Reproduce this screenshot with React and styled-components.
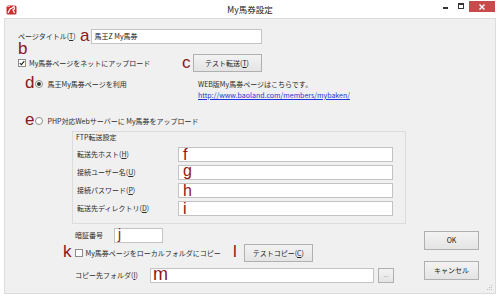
import React from "react";
import styled, { createGlobalStyle } from "styled-components";

const Global = createGlobalStyle`
  html, body { margin: 0; padding: 0; background: #ffffff; }
  body { font-family: "Noto Sans CJK JP", "Noto Sans", sans-serif; }
`;

const Window = styled.div`
  width: 500px;
  height: 298px;
  box-sizing: border-box;
  padding: 0 4px 4px 4px;
  background: #ffffff;
  display: flex;
  flex-direction: column;
  font-family: "Noto Sans CJK JP", "Noto Sans", sans-serif;
  font-size: 7px;
  color: #2a2a2a;
`;

const TitleBar = styled.div`
  height: 18px;
  flex: none;
  display: grid;
  grid-template-columns: 1fr auto 1fr;
  align-items: start;
`;

const AppIcon = styled.svg`
  margin: 5px 0 0 2px;
  width: 11px;
  height: 10px;
`;

const Title = styled.div`
  font-size: 8.5px;
  line-height: 18px;
  color: #222;
`;

const Controls = styled.div`
  justify-self: end;
  display: flex;
  align-items: flex-start;
  margin-right: 1px;
`;

const MinBtn = styled.div`
  width: 5px;
  height: 1.5px;
  background: #333;
  margin: 7px 10px 0 0;
`;

const MaxBtn = styled.div`
  width: 4px;
  height: 3px;
  border: 1px solid #333;
  border-top-width: 2px;
  margin: 3px 5px 0 0;
`;

const CloseBtn = styled.div`
  width: 26px;
  height: 11px;
  margin-top: 1px;
  background: #c94a4a;
  display: flex;
  align-items: center;
  justify-content: center;
`;

const Content = styled.div`
  flex: 1;
  position: relative;
  box-sizing: border-box;
  border: 1px solid #dcdcdc;
  background: #f0f0f0;
  display: grid;
  grid-template-columns: 1fr 55px;
  padding: 10px 16px 10px 13px;
`;

const Main = styled.div`
  display: flex;
  flex-direction: column;
`;

const Side = styled.div`
  display: flex;
  flex-direction: column;
  justify-content: flex-end;
  gap: 11px;
  padding-bottom: 3px;
`;

const Row = styled.div`
  display: flex;
  align-items: ${(p) => p.$align || "center"};
  height: ${(p) => p.$h}px;
  margin-top: ${(p) => p.$mt || 0}px;
  margin-left: ${(p) => p.$ml || 0}px;
`;

const TopRow = styled.div`
  display: flex;
  align-items: flex-start;
  margin-top: ${(p) => p.$mt || 0}px;
`;

const Slot = styled.div`
  display: flex;
  align-items: center;
  flex: none;
  width: ${(p) => p.$w}px;
  height: ${(p) => p.$h || 16}px;
  padding-left: ${(p) => p.$pl || 0}px;
  box-sizing: border-box;
`;

const Label = styled.div`
  flex: none;
  width: ${(p) => p.$w}px;
  white-space: nowrap;
  line-height: 11px;
`;

const Text = styled.span`
  white-space: nowrap;
  line-height: 11px;
  margin-left: ${(p) => p.$ml || 0}px;
`;

const Letter = styled.span`
  font-family: "Liberation Sans", Arial, sans-serif;
  font-size: ${(p) => p.$size || 17}px;
  line-height: ${(p) => (p.$lh ? `${p.$lh}px` : 1)};
  color: #8b1717;
  flex: none;
  margin-bottom: ${(p) => p.$lift || 0}px;
  margin-left: ${(p) => p.$ml || 0}px;
`;

const Field = styled.div`
  flex: none;
  box-sizing: border-box;
  width: ${(p) => p.$w}px;
  height: 15px;
  margin-left: ${(p) => p.$ml || 0}px;
  background: #ffffff;
  border: 1px solid #c3c3c3;
  display: flex;
  align-items: center;
  padding-left: ${(p) => p.$pl ?? 2}px;
  white-space: nowrap;
  line-height: 11px;
  color: #222;
`;

const Button = styled.div`
  flex: none;
  box-sizing: border-box;
  width: ${(p) => p.$w}px;
  height: ${(p) => p.$h || 18}px;
  margin-left: ${(p) => p.$ml || 0}px;
  border: 1px solid #b0b0b0;
  background: linear-gradient(#f3f3f3, #e4e4e4);
  display: flex;
  align-items: center;
  justify-content: center;
  white-space: nowrap;
  line-height: 11px;
  color: #222;
`;

const Browse = styled(Button)`
  width: 16px;
  height: 15px;
  color: #888;
  font-size: 6px;
  padding-bottom: 2px;
`;

const Box = styled.span`
  flex: none;
  box-sizing: border-box;
  width: 8px;
  height: 8px;
  border: 1px solid #8c8c8c;
  background: #fff;
  border-radius: ${(p) => (p.$round ? "50%" : "0")};
  display: flex;
  align-items: center;
  justify-content: center;
  margin-left: ${(p) => p.$ml || 0}px;
`;

const Dot = styled.span`
  width: 4px;
  height: 4px;
  border-radius: 50%;
  background: #333;
`;

const Info = styled.div`
  display: flex;
  flex-direction: column;
  padding-top: 3px;
  line-height: 11px;
  white-space: nowrap;
`;

const Link = styled.a`
  color: #1d34d8;
  text-decoration: underline;
  line-height: 11px;
`;

const Group = styled.div`
  box-sizing: border-box;
  margin: 2px 0 0 54px;
  width: 334px;
  border: 1px solid #dcdcdc;
  padding: 0 0 7px 3px;
`;

const GroupTitle = styled.div`
  line-height: 11px;
  margin-bottom: 4px;
`;

const GroupGrid = styled.div`
  display: grid;
  grid-template-columns: 102px 215px;
  grid-auto-rows: 15px;
  row-gap: 3px;
  align-items: center;
`;

const GroupLabel = styled.div`
  padding-left: 1px;
  white-space: nowrap;
  line-height: 11px;
`;

const Grip = styled.svg`
  position: absolute;
  right: 2px;
  bottom: 2px;
  width: 6px;
  height: 6px;
`;

function Check({ checked, ml }) {
  return (
    <Box $ml={ml}>
      {checked && (
        <svg width="6" height="6" viewBox="0 0 6 6">
          <path d="M0.8 3.1 L2.4 4.7 L5.3 1.2" fill="none" stroke="#222" strokeWidth="1.1" />
        </svg>
      )}
    </Box>
  );
}

function Radio({ checked, ml }) {
  return <Box $round $ml={ml}>{checked && <Dot />}</Box>;
}

export default function App() {
  return (
    <>
      <Global />
      <Window>
        <TitleBar>
          <AppIcon viewBox="0 0 11 10">
            <rect x="0.5" y="0.5" width="10" height="9" rx="1.5" fill="#cf2b2b" />
            <path d="M2 8 L4 4 L6 3 L8 1.5 L8.5 4 L7 5 L8.5 8" fill="none" stroke="#fff" strokeWidth="1.2" />
            <path d="M1 1.5 L4 1.5" stroke="#f4b0b0" strokeWidth="1" />
          </AppIcon>
          <Title>My馬券設定</Title>
          <Controls>
            <MinBtn />
            <MaxBtn />
            <CloseBtn>
              <svg width="6" height="6" viewBox="0 0 6 6">
                <path d="M0.5 0.5 L5.5 5.5 M5.5 0.5 L0.5 5.5" stroke="#fff" strokeWidth="1.4" />
              </svg>
            </CloseBtn>
          </Controls>
        </TitleBar>
        <Content>
          <Main>
            <Row $h={15}>
              <Label $w={62}>
                ページタイトル(<u>T</u>)
              </Label>
              <Letter $lift={2}>a</Letter>
              <Field $w={171} $ml={2} $pl={2}>
                馬王Z My馬券
              </Field>
            </Row>
            <Row $h={11} $mt={-1} $align="flex-start">
              <Letter $lh={12}>b</Letter>
            </Row>
            <Row $h={18}>
              <Slot $w={164} $h={18}>
                <Check checked />
                <Text $ml={3}>My馬券ページをネットにアップロード</Text>
              </Slot>
              <Letter $lift={2}>c</Letter>
              <Button $w={69} $ml={2}>
                テスト転送(<u>T</u>)
              </Button>
            </Row>
            <TopRow $mt={4}>
              <Slot $w={180} $pl={7}>
                <Letter $lift={4}>d</Letter>
                <Radio checked ml={1} />
                <Text $ml={4}>馬王My馬券ページを利用</Text>
              </Slot>
              <Info>
                <span>WEB版My馬券ページはこちらです。</span>
                <Link href="#">http://www.baoland.com/members/mybaken/</Link>
              </Info>
            </TopRow>
            <Row $h={16} $mt={12}>
              <Slot $w={300} $pl={7}>
                <Letter $lift={4}>e</Letter>
                <Radio ml={1} />
                <Text $ml={4}>PHP対応Webサーバーに My馬券をアップロード</Text>
              </Slot>
            </Row>
            <Group>
              <GroupTitle>FTP転送設定</GroupTitle>
              <GroupGrid>
                <GroupLabel>
                  転送先ホスト(<u>H</u>)
                </GroupLabel>
                <Field $w={215} $pl={4}>
                  <Letter $size={16}>f</Letter>
                </Field>
                <GroupLabel>
                  接続ユーザー名(<u>U</u>)
                </GroupLabel>
                <Field $w={215} $pl={4}>
                  <Letter $size={16} $lift={4}>g</Letter>
                </Field>
                <GroupLabel>
                  接続パスワード(<u>P</u>)
                </GroupLabel>
                <Field $w={215} $pl={4}>
                  <Letter $size={16}>h</Letter>
                </Field>
                <GroupLabel>
                  転送先ディレクトリ(<u>D</u>)
                </GroupLabel>
                <Field $w={215} $pl={4}>
                  <Letter $size={16}>i</Letter>
                </Field>
              </GroupGrid>
            </Group>
            <Row $h={15} $mt={4} $ml={57}>
              <Label $w={39}>暗証番号</Label>
              <Field $w={49} $pl={3}>
                <Letter $size={14} $lift={3}>j</Letter>
              </Field>
            </Row>
            <Row $h={18} $mt={1} $ml={45}>
              <Slot $w={170} $h={18}>
                <Letter $lift={4}>k</Letter>
                <Check ml={3} />
                <Text $ml={3}>My馬券ページをローカルフォルダにコピー</Text>
              </Slot>
              <Letter $lift={4}>l</Letter>
              <Button $w={69} $ml={7}>
                テストコピー(<u>C</u>)
              </Button>
            </Row>
            <Row $h={15} $mt={6} $ml={57}>
              <Label $w={75}>
                コピー先フォルダ(<u>I</u>)
              </Label>
              <Field $w={224} $pl={2}>
                <Letter $size={18} $lift={3}>m</Letter>
              </Field>
              <Browse $ml={4}>...</Browse>
            </Row>
          </Main>
          <Side>
            <Button $w={55} $h={19}>OK</Button>
            <Button $w={55} $h={19}>キャンセル</Button>
          </Side>
          <Grip viewBox="0 0 6 6">
            <rect x="4" y="0" width="1" height="1" fill="#bbb" />
            <rect x="2" y="2" width="1" height="1" fill="#bbb" />
            <rect x="4" y="2" width="1" height="1" fill="#bbb" />
            <rect x="0" y="4" width="1" height="1" fill="#bbb" />
            <rect x="2" y="4" width="1" height="1" fill="#bbb" />
            <rect x="4" y="4" width="1" height="1" fill="#bbb" />
          </Grip>
        </Content>
      </Window>
    </>
  );
}
